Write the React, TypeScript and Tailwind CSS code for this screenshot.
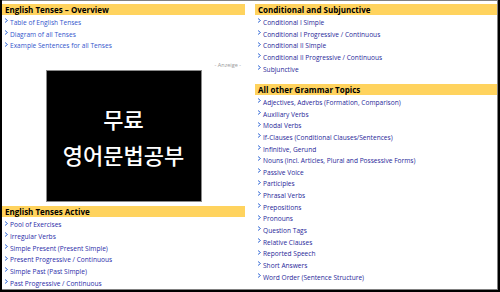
import React from "react";

const overview = ["Table of English Tenses", "Diagram of all Tenses", "Example Sentences for all Tenses"];
const active = [
  "Pool of Exercises",
  "Irregular Verbs",
  "Simple Present (Present Simple)",
  "Present Progressive / Continuous",
  "Simple Past (Past Simple)",
  "Past Progressive / Continuous",
];
const conditional = [
  "Conditional I Simple",
  "Conditional I Progressive / Continuous",
  "Conditional II Simple",
  "Conditional II Progressive / Continuous",
  "Subjunctive",
];
const other = [
  "Adjectives, Adverbs (Formation, Comparison)",
  "Auxiliary Verbs",
  "Modal Verbs",
  "If-Clauses (Conditional Clauses/Sentences)",
  "Infinitive, Gerund",
  "Nouns (incl. Articles, Plural and Possessive Forms)",
  "Passive Voice",
  "Participles",
  "Phrasal Verbs",
  "Prepositions",
  "Pronouns",
  "Question Tags",
  "Relative Clauses",
  "Reported Speech",
  "Short Answers",
  "Word Order (Sentence Structure)",
];

function Header({ title, className = "" }: { title: string; className?: string }) {
  return (
    <div className={`h-[11px] bg-[#ffd35e] pl-[3px] text-[8px] font-bold leading-[11px] text-black ${className}`}>
      {title}
    </div>
  );
}

function LinkList({ items, color }: { items: string[]; color: string }) {
  return (
    <ul className="mt-[2px]">
      {items.map((item, i) => (
        <li key={i} className="flex h-[11.65px] items-center whitespace-nowrap">
          <svg width="8" height="8" viewBox="0 0 8 8" className="mb-[3px] ml-[1px] shrink-0">
            <path d="M2 1.5 L4.5 3.5 L2 5.5" fill="none" stroke="#3b6fd8" strokeWidth="1" />
          </svg>
          <span className={`ml-[-1px] text-[6.6px] leading-[11.65px] ${color}`}>{item}</span>
        </li>
      ))}
    </ul>
  );
}

export default function App() {
  return (
    <div className="h-[292px] w-[500px] overflow-hidden bg-black pb-[2px] pl-[2px] pr-[2px] font-['Open_Sans',sans-serif]">
      <div className="grid h-full grid-cols-[243px_242px] gap-x-[10px] border-b border-r border-t border-[#808080] bg-white pt-[3px]">
        <div className="flex flex-col">
          <Header title="English Tenses – Overview" />
          <LinkList items={overview} color="text-[#3355cc]" />
          <p className="mt-[10.5px] pr-[4px] text-right text-[5.5px] leading-[6px] text-[#9a9a9a]">- Anzeige -</p>
          <div className="mx-auto mt-[2px] flex h-[132px] w-[156px] flex-col items-center justify-center border border-[#8a8a8a] bg-black font-['Noto_Sans_CJK_KR',sans-serif] text-[22px] font-medium leading-[36px] text-white">
            <span>무료</span>
            <span>영어문법공부</span>
          </div>
          <Header title="English Tenses Active" className="mt-[4px]" />
          <LinkList items={active} color="text-[#2a2aa8]" />
        </div>
        <div className="flex flex-col">
          <Header title="Conditional and Subjunctive" />
          <LinkList items={conditional} color="text-[#1f1f99]" />
          <Header title="All other Grammar Topics" className="mt-[8.75px]" />
          <LinkList items={other} color="text-[#1f1f99]" />
        </div>
      </div>
    </div>
  );
}
